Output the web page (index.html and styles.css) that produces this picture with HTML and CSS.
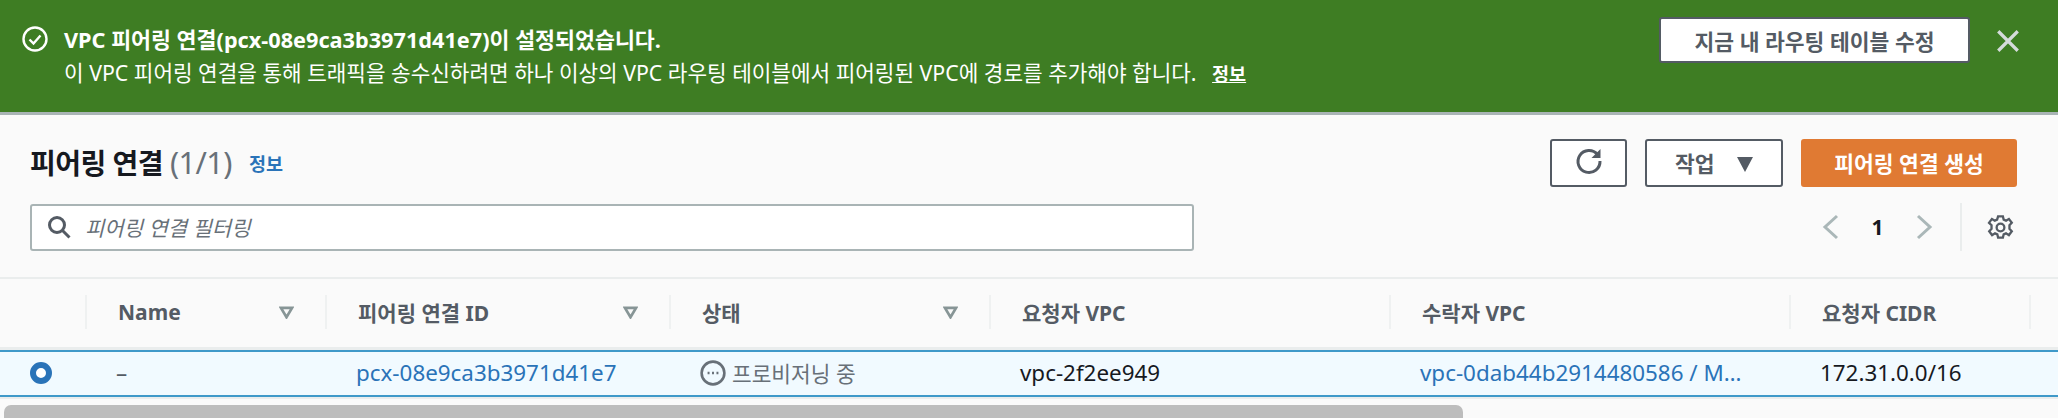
FILE: index.html
```html
<!DOCTYPE html>
<html lang="ko">

<head>
    <meta charset="UTF-8">
    <meta name="viewport" content="width=device-width, initial-scale=1.0">
    <title>피어링 연결</title>
    <link rel="stylesheet" href="styles.css">
</head>

<body>
    <div class="flash">
        <svg class="flash-icon" viewBox="0 0 26 26">
            <circle cx="13" cy="13" r="11.5" />
            <path d="M7.5 13.5l4 4 7-8" />
        </svg>
        <div class="flash-text">
            <div class="flash-title">VPC 피어링 연결(pcx-08e9ca3b3971d41e7)이 설정되었습니다.</div>
            <div class="flash-desc">이 VPC 피어링 연결을 통해 트래픽을 송수신하려면 하나 이상의 VPC 라우팅 테이블에서 피어링된 VPC에 경로를 추가해야 합니다.
                <a class="flash-info">정보</a>
            </div>
        </div>
        <button class="button flash-action">지금 내 라우팅 테이블 수정</button>
        <svg class="flash-close" viewBox="0 0 24 24">
            <path d="M3 3l18 18M21 3L3 21" />
        </svg>
    </div>

    <div class="panel">
        <div class="panel-head">
            <h1>피어링 연결 <span class="count">(1/1)</span></h1>
            <a class="info">정보</a>
            <div class="actions">
                <button class="button refresh">
                    <svg viewBox="0 0 30 30">
                        <path d="M23.5 8.5A11 11 0 1 0 26 15" />
                        <path class="fill" d="M26.5 3v9h-9z" />
                    </svg>
                </button>
                <button class="button menu">작업 <span class="caret"></span></button>
                <button class="button primary">피어링 연결 생성</button>
            </div>
        </div>

        <div class="tools">
            <div class="filter">
                <svg viewBox="0 0 24 24">
                    <circle cx="10" cy="10" r="7.5" />
                    <path d="M15.5 15.5l7 7" />
                </svg>
                <span>피어링 연결 필터링</span>
            </div>
            <div class="pager">
                <svg class="arrow" viewBox="0 0 18 26"><path d="M15 2L3 13l12 11" /></svg>
                <b>1</b>
                <svg class="arrow" viewBox="0 0 18 26"><path d="M3 2l12 11L3 24" /></svg>
                <span class="pager-line"></span>
                <svg class="gear" viewBox="0 0 28 28">
                    <circle cx="14" cy="14" r="4" />
                    <path d="M11.5 2.5h5l.8 3.4 2.4 1 3-1.8 3 4-2.4 2.6v3.6l2.4 2.6-3 4-3-1.8-2.4 1-.8 3.4h-5l-.8-3.4-2.4-1-3 1.8-3-4 2.4-2.6v-3.6L2.100 9.100l3-4 3 1.800 2.400-1z" />
                </svg>
            </div>
        </div>

        <table class="table">
            <colgroup>
                <col class="c-radio">
                <col class="c-name">
                <col class="c-id">
                <col class="c-state">
                <col class="c-req">
                <col class="c-acc">
                <col class="c-cidr">
                <col>
            </colgroup>
            <thead>
                <tr>
                    <th></th>
                    <th><div class="th">Name <svg class="sort" viewBox="0 0 16 14"><path d="M2 2h12L8 12z" /></svg></div></th>
                    <th><div class="th">피어링 연결 ID <svg class="sort" viewBox="0 0 16 14"><path d="M2 2h12L8 12z" /></svg></div></th>
                    <th><div class="th">상태 <svg class="sort" viewBox="0 0 16 14"><path d="M2 2h12L8 12z" /></svg></div></th>
                    <th><div class="th">요청자 VPC</div></th>
                    <th><div class="th">수락자 VPC</div></th>
                    <th><div class="th">요청자 CIDR</div></th>
                    <th><div class="th"></div></th>
                </tr>
            </thead>
            <tbody>
                <tr>
                    <td><span class="radio"></span></td>
                    <td class="dash">–</td>
                    <td><a class="link">pcx-08e9ca3b3971d41e7</a></td>
                    <td>
                        <span class="status">
                            <svg viewBox="0 0 24 24">
                                <circle cx="12" cy="12" r="10.500" />
                                <path d="M7 12h1.800M11.100 12h1.800M15.200 12h1.800" />
                            </svg>
                            프로비저닝 중
                        </span>
                    </td>
                    <td>vpc-2f2ee949</td>
                    <td><a class="link">vpc-0dab44b2914480586 / M…</a></td>
                    <td>172.31.0.0/16</td>
                    <td></td>
                </tr>
            </tbody>
        </table>

        <div class="scroll"><div class="scroll-thumb"></div></div>
    </div>
</body>

</html>
```

FILE: styles.css
```css
* {
    box-sizing: border-box;
}

html,
body {
    height: 100%;
}

body {
    margin: 0;
    overflow: hidden;
    font-family: "Noto Sans", "Noto Sans CJK KR", sans-serif;
    font-size: 22.400px;
    color: #16191f;
    background-color: #fafafa;
}

svg {
    fill: none;
    stroke: currentColor;
    flex: none;
}

.flash {
    display: flex;
    height: 115px;
    padding: 17px 20px 0 22px;
    background: #3e7d23;
    border-bottom: 3px solid #a9b4b5;
    color: #fff;
}

.flash-icon {
    width: 26px;
    height: 26px;
    margin-top: 9px;
    stroke-width: 2.400;
}

.flash-text {
    flex: 1;
    padding: 6px 0 0 16px;
    font-size: 21.300px;
    line-height: 33px;
}

.flash-title {
    font-size: 21.700px;
    font-weight: 700;
}

.flash-info {
    margin-left: 10px;
    font-size: 18.500px;
    font-weight: 700;
    text-decoration: underline;
}

.button {
    font-family: inherit;
    font-size: 21.500px;
    font-weight: 700;
    color: #545b64;
    background: #fff;
    border: 2px solid #545b64;
    border-radius: 3px;
    padding: 0;
}

.flash-action {
    width: 311px;
    height: 46px;
}

.flash-close {
    width: 26px;
    height: 26px;
    margin: 11px 17px 0 25px;
    stroke: #d5dbdb;
    stroke-width: 3;
}

.panel-head {
    display: flex;
    align-items: center;
    padding: 23px 41px 0 30px;
}

h1 {
    margin: 0;
    font-size: 28px;
    font-weight: 700;
    line-height: 48px;
    letter-spacing: -0.5px;
}

.count {
    font-size: 30.500px;
    font-weight: 400;
    color: #687078;
}

.info {
    margin-left: 17px;
    font-size: 18.500px;
    font-weight: 700;
    color: #2a73b8;
}

.actions {
    display: flex;
    gap: 18px;
    margin-left: auto;
}

.actions .button {
    height: 48px;
}

.refresh {
    width: 77px;
}

.refresh svg {
    width: 30px;
    height: 30px;
    margin-top: 3px;
    stroke-width: 3;
}

.fill {
    fill: currentColor;
    stroke: none;
}

.menu {
    width: 138px;
}

.caret {
    display: inline-block;
    width: 0;
    height: 0;
    margin-left: 17px;
    border-left: 8px solid transparent;
    border-right: 8px solid transparent;
    border-top: 15px solid #545b64;
}

.actions .primary {
    width: 216px;
    color: #fff;
    background: #e07a33;
    border-color: #e07a33;
}

.tools {
    display: flex;
    align-items: center;
    height: 48px;
    margin-top: 16px;
    padding-left: 30px;
}

.filter {
    display: flex;
    align-items: center;
    width: 1164px;
    height: 47px;
    padding-left: 15px;
    background: #fff;
    border: 2px solid #a9b4b5;
    border-radius: 3px;
    font-size: 21px;
    font-style: italic;
    color: #687078;
}

.filter svg {
    width: 24px;
    height: 24px;
    margin-right: 14px;
    color: #545b64;
    stroke-width: 3;
}

.pager {
    display: flex;
    align-items: center;
    margin-left: auto;
    padding-right: 44px;
}

.pager b {
    width: 75px;
    font-size: 21px;
    color: #16191f;
    text-align: center;
}

.arrow {
    width: 18px;
    height: 26px;
    color: #aab7b8;
    stroke-width: 3;
}

.pager-line {
    width: 2px;
    height: 48px;
    margin: 0 25px 0 27px;
    background: #eaeded;
}

.gear {
    width: 27px;
    height: 27px;
    color: #545b64;
    stroke-width: 2.400;
}

.table {
    width: 100%;
    margin-top: 26px;
    border-collapse: separate;
    border-spacing: 0;
    table-layout: fixed;
    border-top: 2px solid #eaeded;
    border-bottom: 2px solid #eaeded;
}

.c-radio {
    width: 85px;
}

.c-name {
    width: 240px;
}

.c-id {
    width: 344px;
}

.c-state {
    width: 320px;
}

.c-req {
    width: 400px;
}

.c-acc {
    width: 400px;
}

.c-cidr {
    width: 240px;
}

th {
    height: 71px;
    padding: 0 0 2px;
    text-align: left;
    border-bottom: 3px solid #eaeded;
}

.th {
    display: flex;
    align-items: center;
    justify-content: space-between;
    height: 34px;
    padding: 0 31px 0 31px;
    font-size: 21px;
    font-weight: 700;
    color: #545b64;
    border-left: 2px solid #eff1f1;
}

.sort {
    width: 15px;
    height: 13px;
    color: #879596;
    stroke-width: 3;
}

td {
    height: 47px;
    padding: 0 0 2px 31px;
    background: #f1faff;
    border-top: 2px solid #3f99c9;
    border-bottom: 2px solid #3f99c9;
    white-space: nowrap;
    overflow: hidden;
}

td:first-child {
    padding-left: 30px;
}

.dash {
    color: #545b64;
}

.link {
    color: #2a73b8;
}

.radio {
    display: block;
    width: 22px;
    height: 22px;
    background: #fff;
    border: 6px solid #2a73b8;
    border-radius: 50%;
}

.status {
    display: flex;
    align-items: center;
    gap: 6px;
    font-size: 21.400px;
    color: #687078;
}

.status svg {
    width: 26px;
    height: 26px;
    stroke-width: 2.400;
}

.scroll {
    margin-top: 6px;
    padding: 0 595px 0 4px;
}

.scroll-thumb {
    height: 14px;
    background: #bdbdbd;
    border-radius: 7px 7px 0 0;
}
```
